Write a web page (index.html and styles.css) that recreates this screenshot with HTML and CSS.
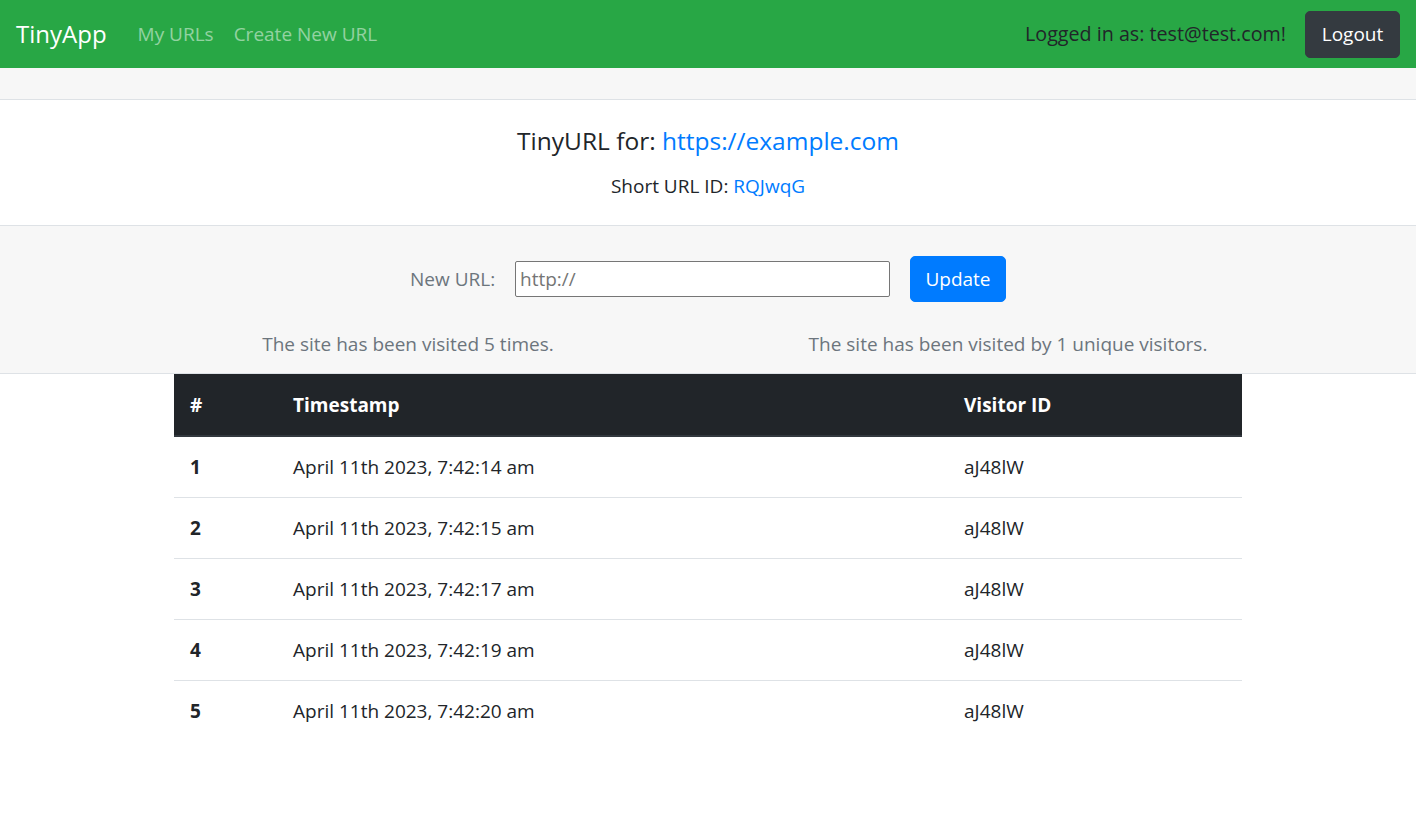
FILE: index.html
```html
<!DOCTYPE html>
<html lang="en">
<head>
<meta charset="utf-8">
<title>TinyApp</title>
<link rel="stylesheet" href="styles.css">
</head>
<body>
<nav class="navbar">
  <a class="brand" href="#">TinyApp</a>
  <a class="nav-link" href="#">My URLs</a>
  <a class="nav-link" href="#">Create New URL</a>
  <div class="spacer"></div>
  <span class="user">Logged in as: test@test.com!</span>
  <button class="btn btn-dark" type="button">Logout</button>
</nav>
<div class="band"></div>
<section class="summary">
  <h2 class="title">TinyURL for: <a href="#">https://example.com</a></h2>
  <p class="short">Short URL ID: <a href="#">RQJwqG</a></p>
</section>
<section class="edit">
  <form class="form-row">
    <label class="label" for="newurl">New URL:</label>
    <input class="url-input" id="newurl" type="text" placeholder="http://">
    <button class="btn btn-primary" type="button">Update</button>
  </form>
  <div class="stats">
    <p class="stat">The site has been visited 5 times.</p>
    <p class="stat">The site has been visited by 1 unique visitors.</p>
  </div>
</section>
<table class="visits">
  <colgroup>
    <col class="c-num">
    <col class="c-time">
    <col class="c-id">
  </colgroup>
  <thead>
    <tr><th>#</th><th>Timestamp</th><th>Visitor ID</th></tr>
  </thead>
  <tbody>
    <tr><th>1</th><td>April 11th 2023, 7:42:14 am</td><td>aJ48lW</td></tr>
    <tr><th>2</th><td>April 11th 2023, 7:42:15 am</td><td>aJ48lW</td></tr>
    <tr><th>3</th><td>April 11th 2023, 7:42:17 am</td><td>aJ48lW</td></tr>
    <tr><th>4</th><td>April 11th 2023, 7:42:19 am</td><td>aJ48lW</td></tr>
    <tr><th>5</th><td>April 11th 2023, 7:42:20 am</td><td>aJ48lW</td></tr>
  </tbody>
</table>
</body>
</html>
```

FILE: styles.css
```css
* { box-sizing: border-box; }

body {
  margin: 0;
  font-family: "Open Sans", "Noto Sans", sans-serif;
  font-size: 19px;
  line-height: 30px;
  color: #212529;
  background: #fff;
}

a { text-decoration: none; }

.navbar {
  height: 68px;
  background: #28a745;
  display: flex;
  align-items: center;
  padding: 0 16px;
}

.brand {
  color: #fff;
  font-size: 24px;
  margin-right: 21px;
}

.nav-link {
  color: rgba(255, 255, 255, 0.5);
  padding: 0 10px;
}

.spacer { flex: 1; }

.user {
  color: #212529;
  margin-right: 19px;
  font-size: 19.7px;
}

.btn {
  font-family: inherit;
  font-size: 19px;
  line-height: 30px;
  border: 1px solid transparent;
  border-radius: 5px;
  padding: 7px 15px;
  color: #fff;
  cursor: pointer;
}

.btn-dark {
  background: #343a40;
  border-color: #343a40;
  height: 47px;
  width: 95px;
  padding: 7px 0;
}

.btn-primary {
  background: #007bff;
  border-color: #007bff;
  height: 46px;
  width: 96px;
  padding: 7px 0;
}

.band {
  height: 32px;
  background: #f7f7f7;
  border-bottom: 1px solid #dee2e6;
}

.summary {
  text-align: center;
  padding: 26px 0 24px;
}

.summary a { color: #007bff; }

.title {
  margin: 0 0 15px;
  font-size: 24.5px;
  line-height: 30px;
  font-weight: 500;
}

.short {
  margin: 0;
}

.edit {
  background: #f7f7f7;
  border-top: 1px solid #dee2e6;
  border-bottom: 1px solid #dee2e6;
  padding: 30px 0 14px;
}

.form-row {
  display: flex;
  justify-content: center;
  align-items: center;
  gap: 20px;
  margin: 0;
}

.label {
  color: #6c757d;
  width: 85px;
  white-space: nowrap;
  text-align: right;
}

.url-input {
  width: 375px;
  height: 36px;
  border: 1px solid #767676;
  border-radius: 2px;
  padding: 1px 4px;
  font-family: inherit;
  font-size: 19px;
  color: #212529;
  background: #fff;
}

.url-input::placeholder { color: #757575; }

.stats {
  width: 1200px;
  margin: 27px auto 0;
  display: flex;
}

.stat {
  flex: 1;
  margin: 0;
  text-align: center;
  color: #6c757d;
}

.visits {
  width: 1068px;
  margin: 0 auto;
  border-collapse: collapse;
  table-layout: fixed;
}

.c-num { width: 103px; }
.c-time { width: 671px; }
.c-id { width: 294px; }

.visits th,
.visits td {
  text-align: left;
  padding: 15px 16px;
  line-height: 30px;
  vertical-align: top;
  border-top: 1px solid #dee2e6;
}

.visits thead th {
  background: #212529;
  color: #fff;
  font-weight: 700;
  padding-top: 16px;
  border-top: 0;
  border-bottom: 2px solid #32383e;
}

.visits tbody tr:first-child th,
.visits tbody tr:first-child td {
  border-top: 0;
}

.visits tbody th { font-weight: 700; }
```
